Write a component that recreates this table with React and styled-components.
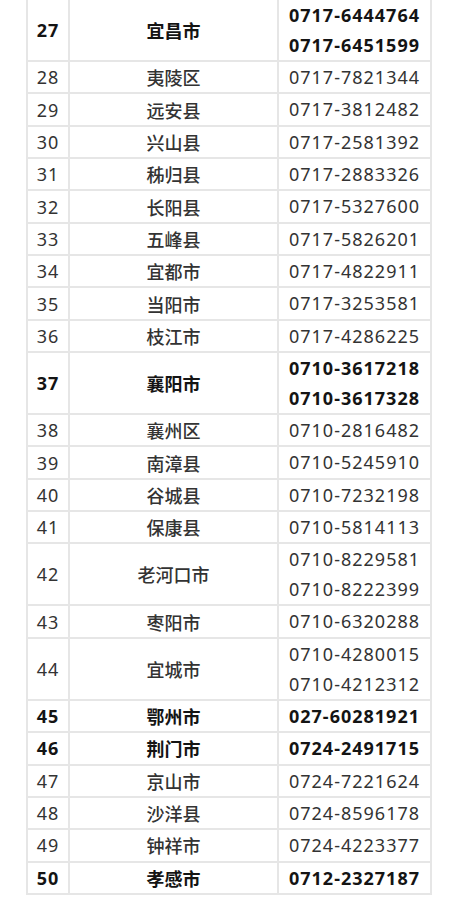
import React from 'react';
import styled, { createGlobalStyle } from 'styled-components';

const GlobalStyle = createGlobalStyle`
  html, body {
    margin: 0;
    padding: 0;
    background: #fff;
  }
  body {
    font-family: "Noto Sans", "Noto Sans CJK SC", sans-serif;
    overflow: hidden;
  }
`;

const rows = [
  { no: 27, name: '宜昌市', phones: ['0717-6444764', '0717-6451599'], bold: true },
  { no: 28, name: '夷陵区', phones: ['0717-7821344'] },
  { no: 29, name: '远安县', phones: ['0717-3812482'] },
  { no: 30, name: '兴山县', phones: ['0717-2581392'] },
  { no: 31, name: '秭归县', phones: ['0717-2883326'] },
  { no: 32, name: '长阳县', phones: ['0717-5327600'] },
  { no: 33, name: '五峰县', phones: ['0717-5826201'] },
  { no: 34, name: '宜都市', phones: ['0717-4822911'] },
  { no: 35, name: '当阳市', phones: ['0717-3253581'] },
  { no: 36, name: '枝江市', phones: ['0717-4286225'] },
  { no: 37, name: '襄阳市', phones: ['0710-3617218', '0710-3617328'], bold: true },
  { no: 38, name: '襄州区', phones: ['0710-2816482'] },
  { no: 39, name: '南漳县', phones: ['0710-5245910'] },
  { no: 40, name: '谷城县', phones: ['0710-7232198'] },
  { no: 41, name: '保康县', phones: ['0710-5814113'] },
  { no: 42, name: '老河口市', phones: ['0710-8229581', '0710-8222399'] },
  { no: 43, name: '枣阳市', phones: ['0710-6320288'] },
  { no: 44, name: '宜城市', phones: ['0710-4280015', '0710-4212312'] },
  { no: 45, name: '鄂州市', phones: ['027-60281921'], bold: true },
  { no: 46, name: '荆门市', phones: ['0724-2491715'], bold: true },
  { no: 47, name: '京山市', phones: ['0724-7221624'] },
  { no: 48, name: '沙洋县', phones: ['0724-8596178'] },
  { no: 49, name: '钟祥市', phones: ['0724-4223377'] },
  { no: 50, name: '孝感市', phones: ['0712-2327187'], bold: true },
];

const Page = styled.div`
  width: 456px;
  height: 900px;
  overflow: hidden;
  background: #fff;
`;

const Table = styled.div`
  display: grid;
  grid-template-columns: 40px 207px 151px;
  gap: 2px;
  padding: 2px;
  width: max-content;
  margin: -2px 0 0 26px;
  background: #e6e6e6;
`;

const Cell = styled.div`
  background: #fff;
  display: flex;
  flex-direction: column;
  align-items: center;
  justify-content: center;
  min-height: 30.35px;
  font-size: 18px;
  letter-spacing: ${p => (p.$cjk ? '0' : '1px')};
  color: ${p => (p.$bold ? '#141414' : '#333')};
  font-weight: ${p => (p.$bold ? 700 : p.$cjk ? 500 : 400)};
`;

const PhoneLine = styled.span`
  display: block;
  line-height: ${p => (p.$multi ? '30px' : '30.35px')};
  white-space: nowrap;
`;

export default function App() {
  return (
    <Page>
      <GlobalStyle />
      <Table>
        {rows.map(r => (
          <React.Fragment key={r.no}>
            <Cell $bold={r.bold}>{r.no}</Cell>
            <Cell $bold={r.bold} $cjk>{r.name}</Cell>
            <Cell $bold={r.bold}>
              {r.phones.map(p => (
                <PhoneLine key={p} $multi={r.phones.length > 1}>{p}</PhoneLine>
              ))}
            </Cell>
          </React.Fragment>
        ))}
      </Table>
    </Page>
  );
}
